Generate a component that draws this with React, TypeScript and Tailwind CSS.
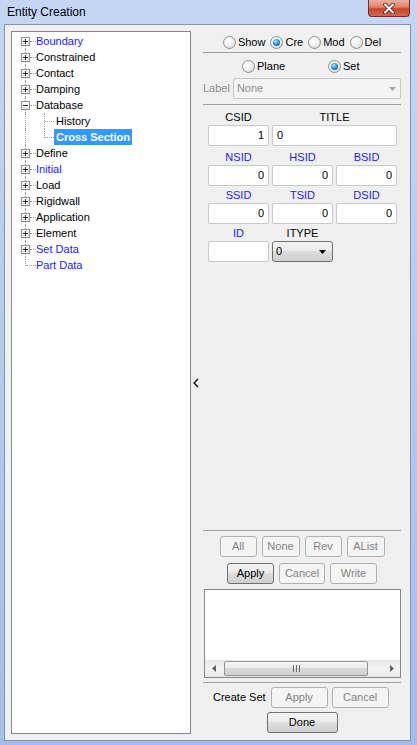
import clsx from 'clsx';

type TreeNode = {
  label: string;
  blue?: boolean;
  box?: 'plus' | 'minus';
  child?: boolean;
  selected?: boolean;
  lastChild?: boolean;
  first?: boolean;
  last?: boolean;
};

const tree: TreeNode[] = [
  { label: 'Boundary', blue: true, box: 'plus', first: true },
  { label: 'Constrained', box: 'plus' },
  { label: 'Contact', box: 'plus' },
  { label: 'Damping', box: 'plus' },
  { label: 'Database', box: 'minus' },
  { label: 'History', child: true },
  { label: 'Cross Section', child: true, selected: true, lastChild: true },
  { label: 'Define', box: 'plus' },
  { label: 'Initial', blue: true, box: 'plus' },
  { label: 'Load', box: 'plus' },
  { label: 'Rigidwall', box: 'plus' },
  { label: 'Application', box: 'plus' },
  { label: 'Element', box: 'plus' },
  { label: 'Set Data', blue: true, box: 'plus' },
  { label: 'Part Data', blue: true, last: true },
];

const dot = 'absolute border-dotted border-[#a0a0a0]';

function ExpandBox({ kind }: { kind: 'plus' | 'minus' }) {
  return (
    <div className="absolute left-[5px] top-[4px] flex h-[9px] w-[9px] items-center justify-center border border-[#919191] bg-[linear-gradient(#ffffff,#e2e2e2)]">
      <svg width="7" height="7" viewBox="0 0 7 7">
        <rect x="1" y="3" width="5" height="1" fill="#2b2b2b" />
        {kind === 'plus' && <rect x="3" y="1" width="1" height="5" fill="#2b2b2b" />}
      </svg>
    </div>
  );
}

function TreeRow({ n }: { n: TreeNode }) {
  return (
    <div className="flex h-[16px] items-center">
      <div className="relative h-[16px] w-[20px] shrink-0">
        {n.last ? (
          <div className={clsx(dot, 'left-[9px] top-0 h-[9px] border-l')} />
        ) : (
          <div className={clsx(dot, 'left-[9px] bottom-0 border-l', n.first ? 'top-[8px]' : 'top-0')} />
        )}
        {!n.child && (
          <div className={clsx(dot, 'top-[8px] border-t', n.box ? 'left-[14px] w-[6px]' : 'left-[10px] w-[10px]')} />
        )}
        {n.box && <ExpandBox kind={n.box} />}
      </div>
      {n.child && (
        <div className="relative h-[16px] w-[18px] shrink-0">
          <div className={clsx(dot, 'left-[8px] top-0 border-l', n.lastChild ? 'h-[9px]' : 'bottom-0')} />
          <div className={clsx(dot, 'left-[9px] top-[8px] w-[9px] border-t')} />
        </div>
      )}
      {n.selected ? (
        <span className="h-[16px] bg-[#3399ff] px-[2px] text-[11px] font-bold leading-[16px] text-white">
          {n.label}
        </span>
      ) : (
        <span
          className={clsx(
            'text-[11px] leading-[16px]',
            n.child ? 'pl-[2px]' : 'pl-0',
            n.blue ? 'text-[#1a1aff]' : 'text-black'
          )}
        >
          {n.label}
        </span>
      )}
    </div>
  );
}

function Radio({ checked, label }: { checked?: boolean; label: string }) {
  return (
    <div className="flex items-center gap-[2px]">
      <span className="flex h-[13px] w-[13px] shrink-0 items-center justify-center rounded-full border border-[#8e8f8f] bg-[radial-gradient(circle_at_35%_30%,#ffffff_0%,#f2f2f2_45%,#cdcdcd_100%)]">
        {checked && (
          <span className="h-[7px] w-[7px] rounded-full bg-[radial-gradient(circle_at_40%_35%,#c4e9ff_0%,#2f93e2_45%,#0a4a8c_100%)]" />
        )}
      </span>
      <span className="text-[11px] leading-[16px] text-black">{label}</span>
    </div>
  );
}

function Btn({ label, className, disabled }: { label: string; className: string; disabled?: boolean }) {
  return (
    <div
      className={clsx(
        'flex h-[21px] shrink-0 items-center justify-center rounded-[3px] border text-[11px]',
        disabled
          ? 'border-[#adb2b5] bg-[#f4f4f4] text-[#838383]'
          : 'border-[#707070] bg-[linear-gradient(#f2f2f2_0%,#ebebeb_50%,#dddddd_50%,#cfcfcf_100%)] text-black',
        className
      )}
    >
      {label}
    </div>
  );
}

function Field({ value, align = 'right', className }: { value?: string; align?: 'left' | 'right'; className?: string }) {
  return (
    <div
      className={clsx(
        'flex h-[21px] items-center rounded-[2px] border border-[#c9c9c9] bg-white px-[4px] text-[11px] text-black',
        align === 'right' ? 'justify-end' : 'justify-start',
        className
      )}
    >
      {value}
    </div>
  );
}

function Label({ text, blue }: { text: string; blue?: boolean }) {
  return (
    <div className={clsx('h-[16px] text-center text-[11px] leading-[16px]', blue ? 'text-[#1a1aff]' : 'text-black')}>
      {text}
    </div>
  );
}

const sep = 'h-px bg-[#a0a0a0]';

export default function App() {
  return (
    <div className="flex h-[745px] w-[417px] flex-col bg-[linear-gradient(180deg,#c5d6f5_0%,#b6cbf0_45%,#a3bdec_100%)] font-['Liberation_Sans',Arial,sans-serif]">
      {/* title bar */}
      <div className="flex h-[24px] shrink-0">
        <span className="self-center pl-[7px] text-[12px] text-black">Entity Creation</span>
        <div className="ml-auto mr-[7px] flex h-[17px] w-[42px] items-center justify-center rounded-b-[4px] border border-t-0 border-[#7a2b1f] bg-[linear-gradient(#eab0a2_0%,#de806b_45%,#c7452c_55%,#cf6a4c_100%)]">
          <svg width="12" height="11" viewBox="0 0 12 11">
            <path d="M2 1.5 L10 9.5 M10 1.5 L2 9.5" stroke="#4a1d15" strokeWidth="3.6" strokeLinecap="round" />
            <path d="M2 1.5 L10 9.5 M10 1.5 L2 9.5" stroke="#ffffff" strokeWidth="2" strokeLinecap="round" />
          </svg>
        </div>
      </div>

      {/* client */}
      <div className="mb-[4px] ml-[4px] flex w-[407px] flex-1 border border-[#8393ae] bg-[#f0f0f0]">
        <div className="mb-[6px] ml-[6px] mt-[6px] w-[180px] border border-[#828790] bg-white pl-[4px] pt-[1px]">
          {tree.map((n) => (
            <TreeRow key={n.label} n={n} />
          ))}
        </div>

        <div className="flex w-[9px] items-center justify-center">
          <svg width="6" height="10" viewBox="0 0 6 10">
            <path d="M5 1 L1 5 L5 9" stroke="#000" strokeWidth="1.3" fill="none" />
          </svg>
        </div>

        <div className="flex flex-1 flex-col pb-[7px] pl-[3px] pr-[9px] pt-[9px]">
          <div className="flex h-[16px] items-center justify-center gap-[5px]">
            <Radio label="Show" />
            <Radio label="Cre" checked />
            <Radio label="Mod" />
            <Radio label="Del" />
          </div>
          <div className={clsx(sep, 'mt-[2px]')} />
          <div className="mt-[5px] flex h-[16px] items-center pl-[39px]">
            <div className="w-[86px]">
              <Radio label="Plane" />
            </div>
            <Radio label="Set" checked />
          </div>
          <div className="mt-[4px] flex h-[21px] items-center gap-[3px]">
            <span className="text-[11px] text-[#8d8d8d]">Label</span>
            <div className="flex h-[21px] flex-1 items-center rounded-[2px] border border-[#c6c6c6] bg-[#f4f4f4] pl-[3px] pr-[4px] text-[11px] text-[#8d8d8d]">
              <span>None</span>
              <svg className="ml-auto" width="7" height="4" viewBox="0 0 7 4">
                <path d="M0 0 H7 L3.5 4 Z" fill="#a6a6a6" />
              </svg>
            </div>
          </div>
          <div className={clsx(sep, 'mt-[5px]')} />

          <div className="mt-[4px] grid grid-cols-[61px_61px_61px] gap-x-[3px] pl-[5px]">
            <Label text="CSID" />
            <div className="col-span-2">
              <Label text="TITLE" />
            </div>
            <Field value="1" />
            <Field value="0" align="left" className="col-span-2" />

            <div className="col-span-3 mt-[3px] grid grid-cols-[61px_61px_61px] gap-x-[3px]">
              <Label text="NSID" blue />
              <Label text="HSID" blue />
              <Label text="BSID" blue />
              <Field value="0" />
              <Field value="0" />
              <Field value="0" />
            </div>

            <div className="col-span-3 mt-[1px] grid grid-cols-[61px_61px_61px] gap-x-[3px]">
              <Label text="SSID" blue />
              <Label text="TSID" blue />
              <Label text="DSID" blue />
              <Field value="0" />
              <Field value="0" />
              <Field value="0" />
            </div>

            <div className="col-span-3 mt-[1px] grid grid-cols-[61px_61px_61px] gap-x-[3px]">
              <Label text="ID" blue />
              <Label text="ITYPE" />
              <div />
              <Field />
              <div className="flex h-[21px] items-center rounded-[3px] border border-[#707070] bg-[linear-gradient(#f2f2f2_0%,#ebebeb_50%,#dddddd_50%,#cfcfcf_100%)] pl-[3px] pr-[6px] text-[11px] text-black">
                <span>0</span>
                <svg className="ml-auto" width="7" height="4" viewBox="0 0 7 4">
                  <path d="M0 0 H7 L3.5 4 Z" fill="#000" />
                </svg>
              </div>
            </div>
          </div>

          {/* bottom block */}
          <div className="mt-auto flex flex-col">
            <div className={sep} />
            <div className="mt-[5px] flex justify-center gap-[5px]">
              <Btn label="All" className="w-[37px]" disabled />
              <Btn label="None" className="w-[38px]" disabled />
              <Btn label="Rev" className="w-[37px]" disabled />
              <Btn label="AList" className="w-[38px]" disabled />
            </div>
            <div className="mt-[6px] flex justify-center gap-[5px]">
              <Btn label="Apply" className="w-[47px]" />
              <Btn label="Cancel" className="w-[46px]" disabled />
              <Btn label="Write" className="w-[47px]" disabled />
            </div>
            <div className="ml-[1px] mt-[5px] flex h-[89px] flex-col border border-[#828790] bg-white">
              <div className="flex-1" />
              <div className="flex h-[17px] items-center bg-[linear-gradient(#e6e6e6,#f2f2f2_40%,#f2f2f2_60%,#e6e6e6)]">
                <div className="flex w-[17px] items-center justify-center">
                  <svg width="4" height="7" viewBox="0 0 4 7">
                    <path d="M4 0 V7 L0 3.5 Z" fill="#606060" />
                  </svg>
                </div>
                <div className="ml-[2px] flex h-[15px] w-[144px] items-center justify-center gap-[2px] rounded-[2px] border border-[#959595] bg-[linear-gradient(#f5f5f5_0%,#e9e9e9_50%,#d9d9d9_50%,#d2d2d2_100%)]">
                  <div className="h-[7px] w-px bg-[#6a6a6a]" />
                  <div className="h-[7px] w-px bg-[#6a6a6a]" />
                  <div className="h-[7px] w-px bg-[#6a6a6a]" />
                </div>
                <div className="flex-1" />
                <div className="flex w-[17px] items-center justify-center">
                  <svg width="4" height="7" viewBox="0 0 4 7">
                    <path d="M0 0 V7 L4 3.5 Z" fill="#606060" />
                  </svg>
                </div>
              </div>
            </div>
            <div className={clsx(sep, 'mt-[4px]')} />
            <div className="mt-[4px] flex h-[21px] items-center">
              <span className="pl-[10px] text-[11px] text-black">Create Set</span>
              <Btn label="Apply" className="ml-[5px] w-[57px]" disabled />
              <Btn label="Cancel" className="ml-[4px] w-[57px]" disabled />
            </div>
            <div className="mt-[4px] flex justify-center">
              <Btn label="Done" className="w-[71px]" />
            </div>
          </div>
        </div>
      </div>
    </div>
  );
}
